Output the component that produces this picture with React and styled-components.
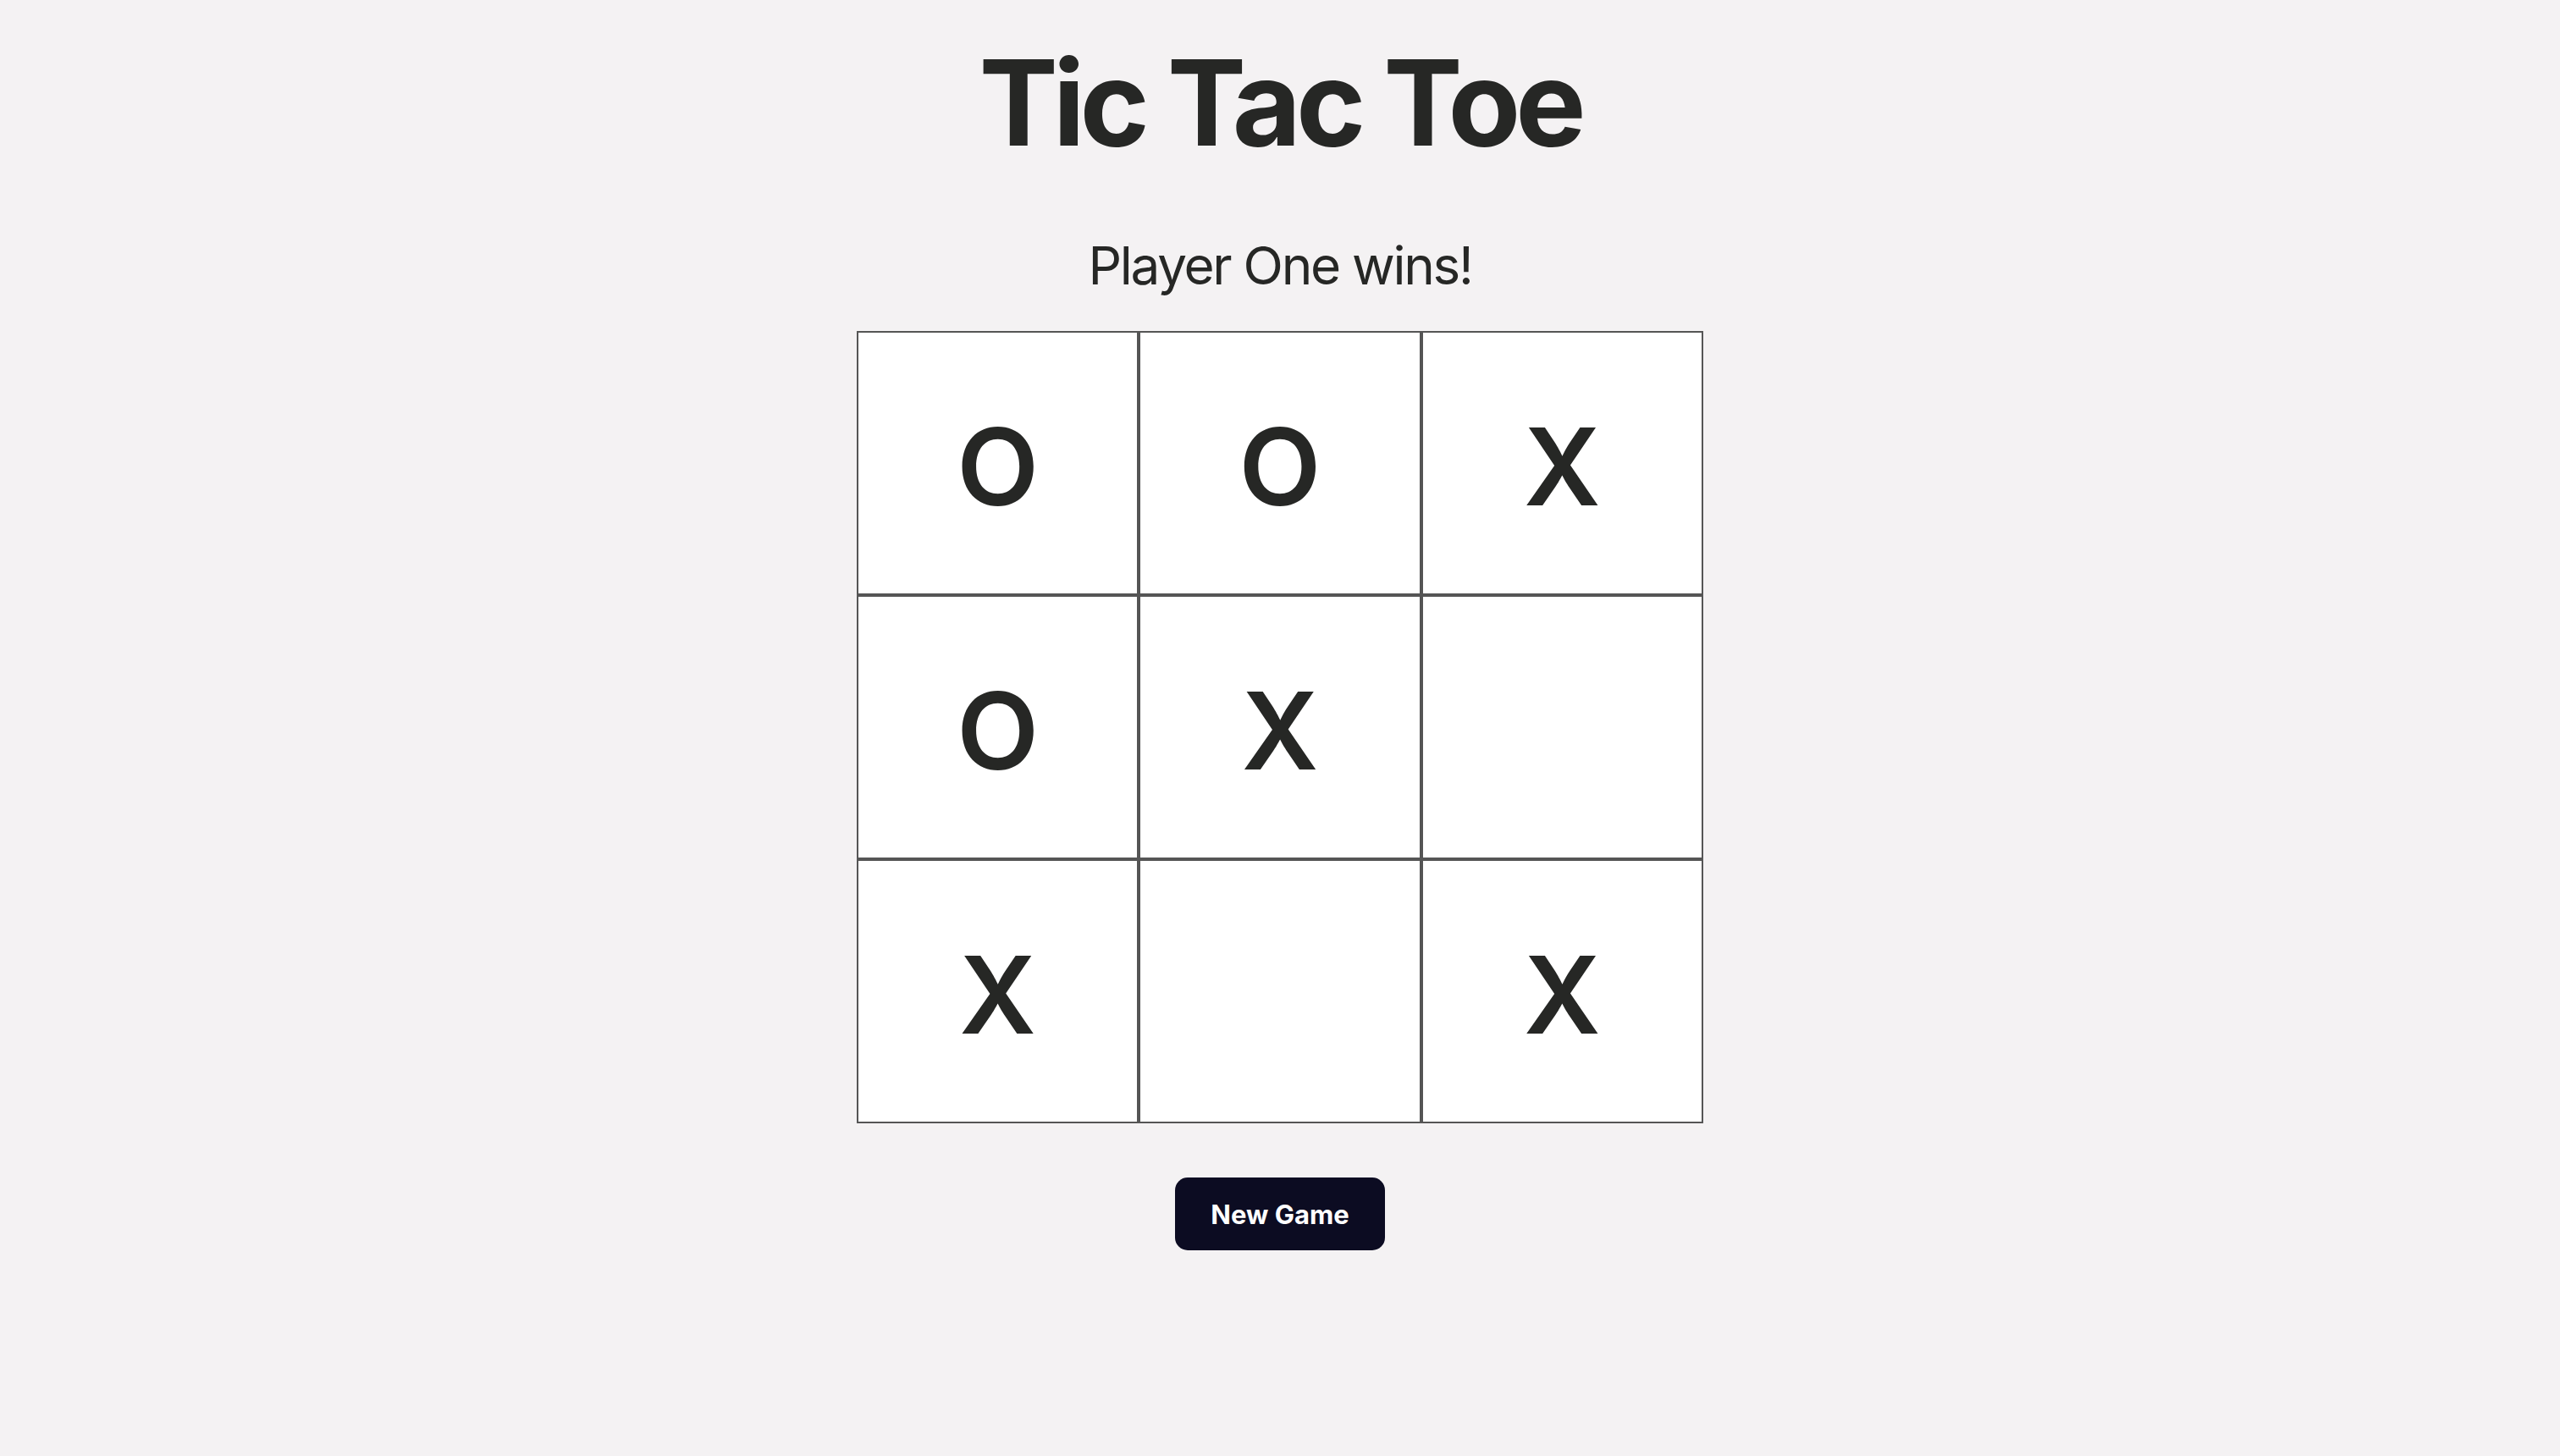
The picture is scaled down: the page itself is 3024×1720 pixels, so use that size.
import React, { useState } from 'react'
import styled, { createGlobalStyle } from 'styled-components'

const GlobalStyle = createGlobalStyle`
	html, body {
		margin: 0;
		padding: 0;
		background: #f4f2f3;
	}

	body {
		font-family: Inter, "Noto Sans", sans-serif;
		color: #262725;
	}
`

const Page = styled.main`
	min-height: 100vh;
	display: flex;
	flex-direction: column;
	align-items: center;
	padding-top: 37px;
	box-sizing: border-box;
`

const Title = styled.h1`
	margin: 0;
	font-size: 140px;
	line-height: 168px;
	font-weight: 700;
	letter-spacing: -0.044em;
`

const Status = styled.p`
	margin: 71px 0 0;
	font-size: 62px;
	line-height: 76px;
	font-weight: 400;
	letter-spacing: -0.037em;
`

const Board = styled.div`
	margin-top: 39px;
	width: 1000px;
	display: grid;
	grid-template-columns: repeat(3, 1fr);
	grid-auto-rows: 312px;
`

const Cell = styled.button`
	display: flex;
	align-items: center;
	justify-content: center;
	padding: 8px 0 0;
	background: #ffffff;
	border: 2px solid #555555;
	font-family: Inter, "Noto Sans", sans-serif;
	font-size: 126px;
	font-weight: 600;
	color: #262725;
	cursor: ${p => (p.$filled ? 'default' : 'pointer')};
`

const NewGameButton = styled.button`
	margin-top: 64px;
	width: 248px;
	height: 86px;
	border: none;
	border-radius: 15px;
	background: #0c0c22;
	color: #ffffff;
	font-family: Inter, "Noto Sans", sans-serif;
	font-size: 31px;
	font-weight: 700;
	cursor: pointer;
`

const initialBoard = ['O', 'O', 'X', 'O', 'X', '', 'X', '', 'X']

const App = () => {
	const [cells, setCells] = useState(initialBoard)

	return (
		<Page>
			<GlobalStyle />
			<Title>Tic Tac Toe</Title>
			<Status>Player One wins!</Status>
			<Board>
				{cells.map((value, i) => (
					<Cell key={i} $filled={!!value}>
						{value}
					</Cell>
				))}
			</Board>
			<NewGameButton onClick={() => setCells(Array(9).fill(''))}>New Game</NewGameButton>
		</Page>
	)
}

export default App
